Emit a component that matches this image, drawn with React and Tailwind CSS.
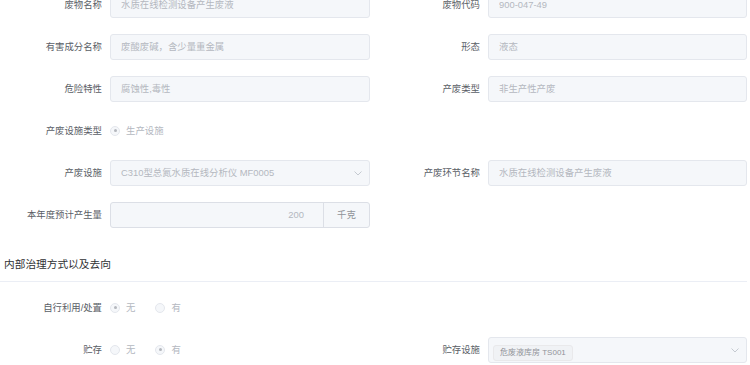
import React from "react";

const font = { fontFamily: '"Liberation Sans", "Noto Sans CJK SC", sans-serif' };

function Label({ children }) {
  return (
    <div className="w-[110px] shrink-0 pr-[8px] text-right text-[9.4px] leading-[26px] text-[#5a5e66]">
      {children}
    </div>
  );
}

function Chevron() {
  return (
    <svg width="8" height="5" viewBox="0 0 8 5" className="shrink-0">
      <path d="M0.5 0.5 L4 4 L7.5 0.5" fill="none" stroke="#c0c4cc" strokeWidth="0.9" />
    </svg>
  );
}

function Input({ value, select }) {
  return (
    <div className="flex h-[26px] flex-1 items-center rounded-[3px] border border-[#e4e7ed] bg-[#f5f7fa] pl-[10px] pr-[7px]">
      <span className="flex-1 truncate text-[9.4px] text-[#b4b8bf]">{value}</span>
      {select && <Chevron />}
    </div>
  );
}

function Field({ label, children }) {
  return (
    <div className="flex h-[26px] items-center">
      <Label>{label}</Label>
      {children}
    </div>
  );
}

function Radio({ checked, text }) {
  return (
    <div className="mr-[20px] flex items-center">
      <span className="flex h-[10px] w-[10px] items-center justify-center rounded-full border border-[#e4e7ed] bg-[#f5f7fa]">
        {checked && <span className="h-[3px] w-[3px] rounded-full bg-[#b4b7bd]" />}
      </span>
      <span className="ml-[6px] text-[9.4px] text-[#b4b8bf]">{text}</span>
    </div>
  );
}

export default function App() {
  return (
    <div className="h-[365px] w-[750px] overflow-hidden bg-white" style={font}>
      <div className="-mt-[8px]">
        <div className="grid grid-cols-[370px_369px] gap-x-[8px] gap-y-[16px]">
          <Field label="废物名称"><Input value="水质在线检测设备产生废液" /></Field>
          <Field label="废物代码"><Input value="900-047-49" /></Field>
          <Field label="有害成分名称"><Input value="废酸废碱，含少量重金属" /></Field>
          <Field label="形态"><Input value="液态" /></Field>
          <Field label="危险特性"><Input value="腐蚀性,毒性" /></Field>
          <Field label="产废类型"><Input value="非生产性产废" /></Field>
          <Field label="产废设施类型">
            <Radio checked text="生产设施" />
          </Field>
          <div />
          <Field label="产废设施"><Input value="C310型总氮水质在线分析仪 MF0005" select /></Field>
          <Field label="产废环节名称"><Input value="水质在线检测设备产生废液" /></Field>
          <Field label="本年度预计产生量">
            <div className="flex h-[26px] flex-1 rounded-[3px] border border-[#dcdfe6] bg-[#f5f7fa]">
              <div className="flex flex-1 items-center justify-end pr-[19px] text-[9.4px] text-[#b4b8bf]">200</div>
              <div className="flex w-[46px] items-center justify-center border-l border-[#dcdfe6] text-[9.4px] text-[#909399]">千克</div>
            </div>
          </Field>
          <div />
        </div>

        <div className="mt-[28px] h-[16px] pl-[4px] text-[10.7px] leading-[16px] text-[#303133]">内部治理方式以及去向</div>
        <div className="mt-[9px] h-px w-[747px] bg-[#ebeef5]" />

        <div className="mt-[13px] grid grid-cols-[370px_369px] gap-x-[8px] gap-y-[16px]">
          <Field label="自行利用/处置">
            <Radio checked text="无" />
            <Radio text="有" />
          </Field>
          <div />
          <Field label="贮存">
            <Radio text="无" />
            <Radio checked text="有" />
          </Field>
          <Field label="贮存设施">
            <div className="flex h-[26px] flex-1 items-center rounded-[3px] border border-[#e4e7ed] bg-[#f5f7fa] pl-[4px] pr-[7px]">
              <div className="flex-1">
                <span className="inline-flex h-[16px] items-center rounded-[3px] border border-[#e9e9eb] bg-[#f0f2f5] px-[6px] text-[8px] text-[#909399]">
                  危废液库房 TS001
                </span>
              </div>
              <Chevron />
            </div>
          </Field>
        </div>
      </div>
    </div>
  );
}
